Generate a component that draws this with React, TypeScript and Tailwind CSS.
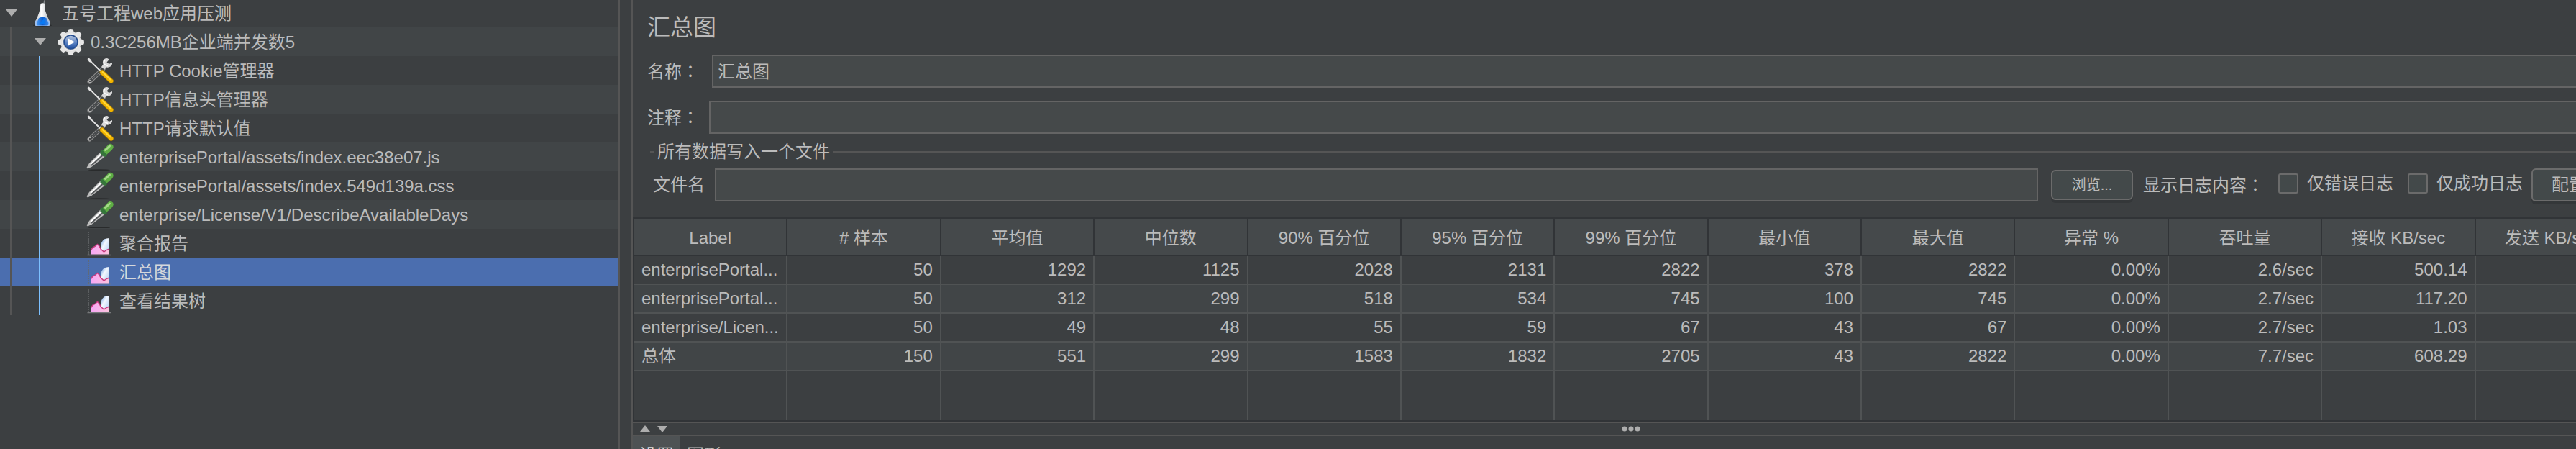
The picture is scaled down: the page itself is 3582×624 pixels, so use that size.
import { useState, type ReactNode } from 'react'

function FlaskIcon() {
  return (
    <svg viewBox="0 0 38 38" className="size-[38px] shrink-0" aria-hidden="true">
      <defs>
        <linearGradient id="flask-glass" x1="0" x2="1" y1="0" y2="0">
          <stop offset="0" stopColor="#b9bdc2" />
          <stop offset="0.45" stopColor="#ffffff" />
          <stop offset="1" stopColor="#a9aeb5" />
        </linearGradient>
        <linearGradient id="flask-liquid" x1="0" x2="1" y1="0" y2="0">
          <stop offset="0" stopColor="#4d9cf5" />
          <stop offset="0.5" stopColor="#0b5fd0" />
          <stop offset="1" stopColor="#3c8df0" />
        </linearGradient>
      </defs>
      <ellipse cx="19" cy="36.3" rx="13" ry="1.5" fill="#26282a" />
      <path d="M22.5 0 L20.5 8" stroke="#85898c" strokeWidth="1.5" />
      <path d="M16.5 6 Q19.5 4.5 22.5 6 L23 16 Q25 22 29.5 32 Q30.5 37 27 37 H11 Q7.500 37 8.500 32 Q13.500 22 15 16 Z" fill="url(#flask-glass)" />
      <path d="M8.500 32 L9.500 29.500 H28.500 L29.500 32 Q30.500 37 27 37 H11 Q7.500 37 8.500 32Z" fill="#9cbff0" />
      <path d="M14 26 Q19.500 23.500 24.500 26 L27.500 33 Q28 36.500 25 36.500 H13 Q10 36.500 11 33Z" fill="url(#flask-liquid)" />
      <path d="M17 31 L22 27 V35 H14Z" fill="#0a79f2" />
    </svg>
  )
}

function GearIcon() {
  return (
    <svg viewBox="0 0 38 38" className="size-[38px] shrink-0" aria-hidden="true">
      <defs>
        <radialGradient id="gear-body">
          <stop offset="0.5" stopColor="#c2c2c2" />
          <stop offset="0.75" stopColor="#f7f7f7" />
          <stop offset="1" stopColor="#d0d0d0" />
        </radialGradient>
        <linearGradient id="gear-lens" x1="0" x2="0" y1="0" y2="1">
          <stop offset="0" stopColor="#b9c6dc" />
          <stop offset="0.55" stopColor="#5b83c4" />
          <stop offset="1" stopColor="#1d4b9c" />
        </linearGradient>
      </defs>
      <g transform="translate(18.500 19.500)" fill="url(#gear-body)">
        <circle r="14.5" />
        {[0, 45, 90, 135, 180, 225, 270, 315].map((angle) => (
          <path key={angle} d="M-4.500 -13 L-3 -18 Q0 -19 3 -18 L4.500 -13Z" fill="#e6e6e6" transform={`rotate(${angle})`} />
        ))}
        <circle r="10.8" fill="#a9adb3" />
        <circle r="9.5" fill="url(#gear-lens)" stroke="#234d92" strokeWidth="1.6" />
        <path d="M-3.500 -5 L5.500 0 L-3.500 5Z" fill="#ffffff" />
      </g>
    </svg>
  )
}

function ToolsIcon() {
  return (
    <svg viewBox="0 0 38 38" className="size-[38px] shrink-0" aria-hidden="true">
      <path d="M24 16 L4.500 34.500" stroke="#8f8f8f" strokeWidth="6" strokeLinecap="round" />
      <path d="M22.500 17.500 L5 34" stroke="#45484a" strokeWidth="3.800" strokeLinecap="round" />
      <path d="M17 23 L8 31" stroke="#8a8a8a" strokeWidth="1" strokeDasharray="2 1.500" />
      <circle cx="5" cy="34" r="1.700" fill="#45484a" stroke="#b5b5b5" strokeWidth="1" />
      <path d="M29 2 L26 2.500 Q21.500 5 23.500 10.500 L21 14 L25 17.500 L28 14.500 Q34 15.500 36 10 L36 8 L31.500 10 L28.500 7.500 L32 3.500Z" fill="#d9d9d9" />
      <path d="M26 4.500 Q23.500 7 25 10.500 L30 12.500" stroke="#ffffff" strokeWidth="1.500" fill="none" />
      <path d="M1.500 3 L3.500 1.500 L6.500 4 L8 7 L20.500 19 L19 20.500 L6.500 8 L4 7Z" fill="#e4e4e4" />
      <path d="M22 21.500 L34.500 33.500" stroke="#8e6c0c" strokeWidth="7" strokeLinecap="round" />
      <path d="M22 21.500 L34.500 33.500" stroke="#f2b400" strokeWidth="5.600" strokeLinecap="round" />
      <path d="M22.500 21 L33.500 31.500" stroke="#ffd83a" strokeWidth="1.800" strokeLinecap="round" />
    </svg>
  )
}

function DropperIcon() {
  return (
    <svg viewBox="0 0 38 38" className="size-[38px] shrink-0" aria-hidden="true">
      <ellipse cx="18" cy="37.300" rx="15" ry="1" fill="#292b2c" />
      <path d="M19.500 12.500 L4 28 L0.500 34 L2 35.500 L8 32.500 L26 18.500Z" fill="#bdbdbd" />
      <path d="M20 15.500 L6 29.500" stroke="#ffffff" strokeWidth="2" />
      <path d="M22.500 17 L7 31" stroke="#55585a" strokeWidth="1.800" />
      <path d="M19.500 10.500 L24 9 L29.500 14.500 L28 18.500 L24.500 19 L19.500 14.500Z" fill="#35763a" />
      <path d="M23 10 L30.500 2 Q34 -0.500 36.800 2.500 Q39 6 35.500 9.500 L28.500 15.500Z" fill="#5fae45" />
      <path d="M26.500 9.500 L32.500 4" stroke="#a5d98a" strokeWidth="3" strokeLinecap="round" />
    </svg>
  )
}

function ChartIcon() {
  return (
    <svg viewBox="0 0 38 38" className="size-[38px] shrink-0" aria-hidden="true">
      <defs>
        <linearGradient id="chart-blue" x1="0" x2="1" y1="0" y2="1">
          <stop offset="0" stopColor="#5e97dd" />
          <stop offset="0.400" stopColor="#f3f8ff" />
          <stop offset="1" stopColor="#a8c8f2" />
        </linearGradient>
        <linearGradient id="chart-pink" x1="0" x2="1" y1="0" y2="0">
          <stop offset="0" stopColor="#f7a6f5" />
          <stop offset="1" stopColor="#fbc3dc" />
        </linearGradient>
      </defs>
      <path d="M3 3 V36" stroke="#66696b" strokeWidth="1.500" strokeDasharray="2 1" />
      <path d="M1.500 35.500 H35" stroke="#77797b" strokeWidth="1.500" />
      <path d="M20 34 V22 Q22 13 28 12.500 L32 12 V34Z" fill="url(#chart-blue)" />
      <path d="M6.500 34.500 V28 L9 24.500 L12 23.500 L15.500 20.500 L18 23 L20 27 L24.500 31 L28 28 L32 27 V34.500Z" fill="url(#chart-pink)" />
      <path d="M6.500 28.500 L9 25 L12 23.500 L15.500 20.500 L18 23 L20 27 L24.500 31 L28 28.500 L32 27" stroke="#c9387f" strokeWidth="1.400" fill="none" />
    </svg>
  )
}

type Node = { text: string; level: number; icon: () => ReactNode; branch?: boolean }

const nodes: Node[] = [
  { text: '五号工程web应用压测', level: 0, icon: FlaskIcon, branch: true },
  { text: '0.3C256MB企业端并发数5', level: 1, icon: GearIcon, branch: true },
  { text: 'HTTP Cookie管理器', level: 2, icon: ToolsIcon },
  { text: 'HTTP信息头管理器', level: 2, icon: ToolsIcon },
  { text: 'HTTP请求默认值', level: 2, icon: ToolsIcon },
  { text: 'enterprisePortal/assets/index.eec38e07.js', level: 2, icon: DropperIcon },
  { text: 'enterprisePortal/assets/index.549d139a.css', level: 2, icon: DropperIcon },
  { text: 'enterprise/License/V1/DescribeAvailableDays', level: 2, icon: DropperIcon },
  { text: '聚合报告', level: 2, icon: ChartIcon },
  { text: '汇总图', level: 2, icon: ChartIcon },
  { text: '查看结果树', level: 2, icon: ChartIcon },
]

const headers = ['Label', '# 样本', '平均值', '中位数', '90% 百分位', '95% 百分位', '99% 百分位', '最小值', '最大值', '异常 %', '吞吐量', '接收 KB/sec', '发送 KB/sec']

const rows = [
  ['enterprisePortal...', '50', '1292', '1125', '2028', '2131', '2822', '378', '2822', '0.00%', '2.6/sec', '500.14', ''],
  ['enterprisePortal...', '50', '312', '299', '518', '534', '745', '100', '745', '0.00%', '2.7/sec', '117.20', ''],
  ['enterprise/Licen...', '50', '49', '48', '55', '59', '67', '43', '67', '0.00%', '2.7/sec', '1.03', ''],
  ['总体', '150', '551', '299', '1583', '1832', '2705', '43', '2822', '0.00%', '7.7/sec', '608.29', ''],
]

function Tree() {
  const [selected, setSelected] = useState(9)
  return (
    <ul role="tree" aria-label="测试计划" className="border-l border-[#4b4e50]">
      {nodes.map((node, i) => {
        const Icon = node.icon
        const background = i === selected ? 'bg-[#4b6eaf]' : i % 2 === 1 && i < 8 ? 'bg-[#414547]' : 'bg-[#3c3f41]'
        return (
          <li
            key={i}
            role="treeitem"
            aria-selected={i === selected}
            onClick={() => setSelected(i)}
            className={`-ml-px flex items-center whitespace-nowrap ${i === 0 ? 'h-[38px] pb-0.5' : 'h-10'} ${background}`}
          >
            {node.level > 0 && (
              <span className="flex w-10 shrink-0 self-stretch pl-3.5">
                <span className="w-0.5 bg-[#555555]" />
              </span>
            )}
            {node.level > 1 && (
              <span className="flex w-10 shrink-0 self-stretch pl-3.5">
                <span className="w-0.5 bg-[#7cc0ff]" />
              </span>
            )}
            <span className="flex w-10 shrink-0 pl-2">
              {node.branch && (
                <button type="button" aria-label="折叠">
                  <svg viewBox="0 0 16 10" className="h-2.5 w-4" aria-hidden="true">
                    <path d="M0 0 H16 L8 10Z" fill="#adadad" />
                  </svg>
                </button>
              )}
            </span>
            <Icon />
            <span className={`pt-0.5 pl-2 ${i === selected ? 'text-[#d5d8dc]' : ''}`}>{node.text}</span>
          </li>
        )
      })}
    </ul>
  )
}

function Colon() {
  return <span className="font-['Noto_Sans_CJK_TC',sans-serif]" lang="zh-TW">：</span>
}

const fieldClass = 'h-[46px] min-w-0 flex-1 border-2 border-[#646464] bg-[#45494a] px-1.5 pb-1 text-[#bbbbbb] outline-none'
const checkClass = 'size-7 shrink-0 appearance-none rounded-[3px] border-2 border-[#6b6b6b] bg-[#43494a] checked:bg-[#4b6eaf]'
const buttonClass = 'shrink-0 rounded-md border-2 border-[#6b6b6b] bg-[#43494a] shadow-[0_4px_0_#343739]'

function Form() {
  return (
    <div className="pt-4">
      <h1 className="mb-4 pl-5 text-[32px] leading-[44px]">汇总图</h1>
      <div className="mb-[18px] flex items-center pl-5">
        <label htmlFor="name" className="w-[90px] shrink-0">名称<Colon /></label>
        <input id="name" defaultValue="汇总图" className={fieldClass} />
      </div>
      <div className="flex items-center pl-5">
        <label htmlFor="comment" className="w-[86px] shrink-0">注释<Colon /></label>
        <input id="comment" className={fieldClass} />
      </div>
      <div className="flex h-12 items-center gap-1 pt-0.5 pl-6">
        <span className="h-0.5 w-1.5 bg-[#555555]" />
        <h2>所有数据写入一个文件</h2>
        <span className="h-0.5 flex-1 bg-[#555555]" />
      </div>
      <div className="mb-[22px] flex items-center pr-8 pl-7">
        <label htmlFor="file" className="w-[86px] shrink-0">文件名</label>
        <input id="file" className={fieldClass} />
        <button type="button" className={`${buttonClass} ml-[18px] h-[42px] w-[114px] text-[20px] leading-6`}>浏览...</button>
        <span className="ml-3.5 w-[188px] shrink-0">显示日志内容<Colon /></span>
        <div className="flex shrink-0 items-center pb-1">
          <input id="errors" type="checkbox" className={checkClass} />
          <label htmlFor="errors" className="mr-5 pl-3">仅错误日志</label>
          <input id="successes" type="checkbox" className={checkClass} />
          <label htmlFor="successes" className="mr-3 pl-3">仅成功日志</label>
        </div>
        <button type="button" className={`${buttonClass} h-[46px] w-[104px]`}>配置</button>
      </div>
    </div>
  )
}

function Results() {
  return (
    <div className="border-y-2 border-l-2 border-[#313437]">
      <table className="w-full table-fixed border-separate border-spacing-0">
        <thead>
          <tr className="h-[52px] bg-[#45494b]">
            {headers.map((h) => (
              <th key={h} className="border-r-2 border-b-2 border-[#313437] p-0 pt-1 font-normal whitespace-nowrap">{h}</th>
            ))}
          </tr>
        </thead>
        <tbody>
          {rows.map((row, r) => (
            <tr key={r} className={`h-10 ${r % 2 ? 'bg-[#414547]' : 'bg-[#3c3f41]'}`}>
              {row.map((cell, c) => (
                <td key={c} className={`border-r-2 border-b-2 border-[#505354] px-2.5 py-0 whitespace-nowrap ${c ? 'text-right' : 'text-left'}`}>{cell}</td>
              ))}
            </tr>
          ))}
          <tr className="h-[68px]">
            {headers.map((h) => (
              <td key={h} className="border-r-2 border-[#505354] p-0" />
            ))}
          </tr>
        </tbody>
      </table>
    </div>
  )
}

function Splitter() {
  return (
    <div className="grid h-5 grid-cols-[1fr_auto_1fr] items-center border-y-2 border-[#555555]">
      <div className="flex gap-2.5 pl-2.5">
        <button type="button" aria-label="向上折叠">
          <svg viewBox="0 0 14 10" className="h-2.5 w-3.5" aria-hidden="true"><path d="M0 9 L7 0 L14 9Z" fill="#adadad" /></svg>
        </button>
        <button type="button" aria-label="向下折叠">
          <svg viewBox="0 0 14 10" className="h-2.5 w-3.5" aria-hidden="true"><path d="M0 1 H14 L7 10Z" fill="#adadad" /></svg>
        </button>
      </div>
      <svg viewBox="0 0 26 8" className="h-2 w-[26px]" aria-hidden="true">
        <circle cx="4" cy="4" r="3.500" fill="#adadad" />
        <circle cx="13" cy="4" r="3.500" fill="#adadad" />
        <circle cx="22" cy="4" r="3.500" fill="#adadad" />
      </svg>
    </div>
  )
}

export default function App() {
  return (
    <div className="flex h-screen overflow-hidden bg-[#3c3f41] font-['Liberation_Sans','Noto_Sans_CJK_SC',sans-serif] text-[24px] leading-9 text-[#bbbbbb]" lang="zh-CN">
      <aside className="w-[862px] shrink-0 border-r-2 border-[#555555]">
        <Tree />
      </aside>
      <main className="ml-4 min-w-0 flex-1 overflow-hidden border-l-2 border-[#555555]">
        <div className="-mr-[74px]">
          <Form />
          <Results />
          <Splitter />
          <div role="tablist" className="flex h-[54px]">
            <button type="button" role="tab" aria-selected="true" className="w-[66px] bg-[#4e5254] text-[#dddddd]">设置</button>
            <button type="button" role="tab" aria-selected="false" className="w-[66px]">图形</button>
          </div>
        </div>
      </main>
    </div>
  )
}
